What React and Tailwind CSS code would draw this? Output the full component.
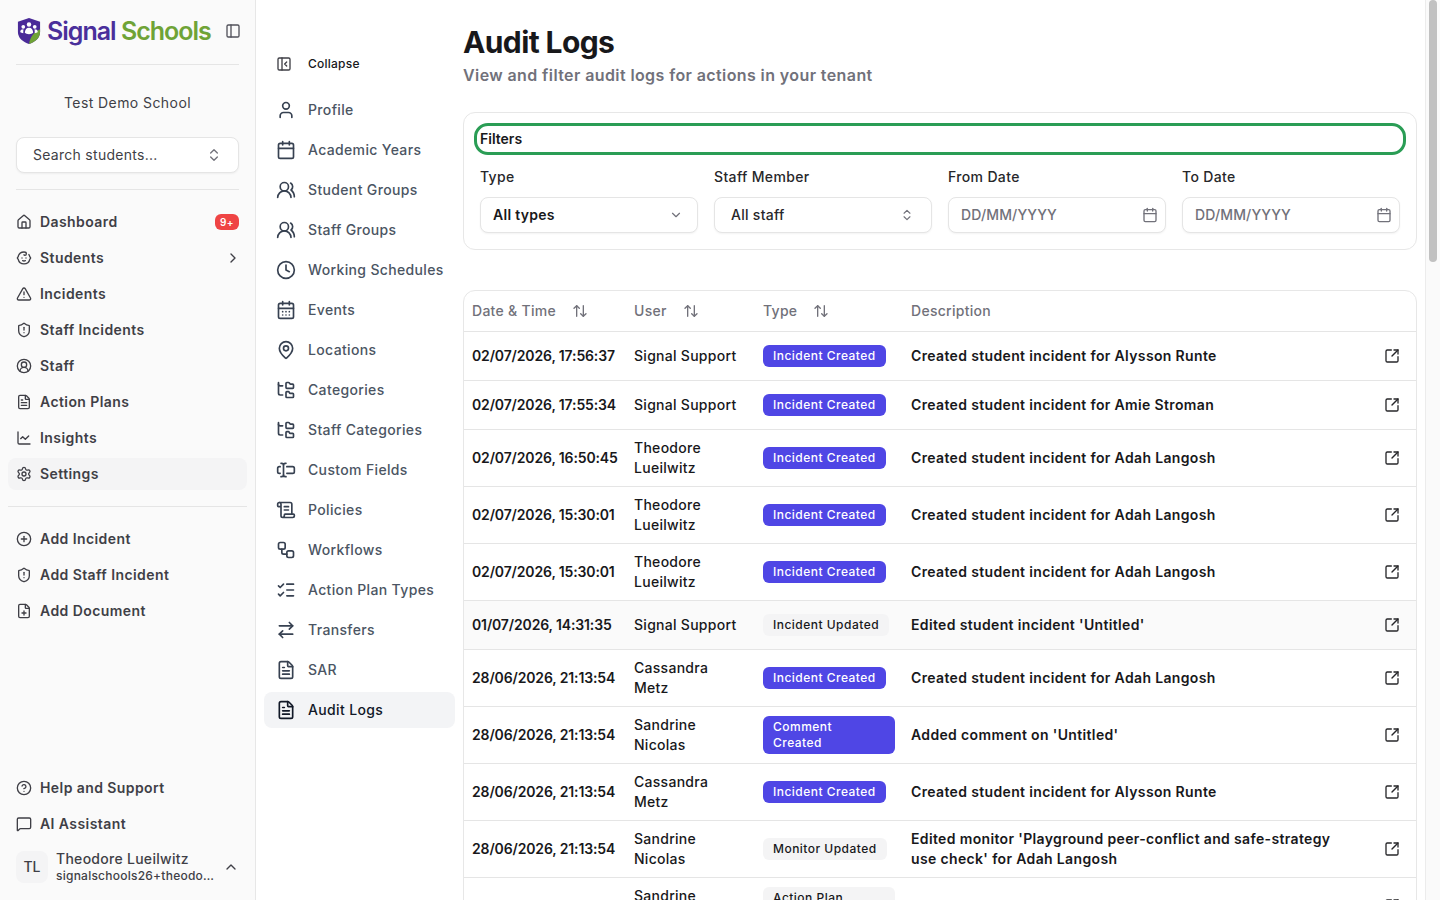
import React from "react";
import {
  ArrowRightLeft, ArrowUpDown, Baby, Calendar, CalendarDays, ChartLine, ChevronDown, ChevronRight, ChevronUp,
  ChevronsUpDown, CircleHelp, CirclePlus, CircleUserRound, Clock, FilePlus, FileText, FolderTree, House, ListChecks,
  MapPin, MessageSquare, PanelLeft, PanelLeftClose, ScrollText, Settings, ShieldAlert, SquareArrowOutUpRight,
  TextCursorInput, TriangleAlert, User, UsersRound, Workflow,
} from "lucide-react";

const mainNav = [
  { label: "Dashboard", icon: House, badge: "9+" },
  { label: "Students", icon: Baby, chevron: true },
  { label: "Incidents", icon: TriangleAlert },
  { label: "Staff Incidents", icon: ShieldAlert },
  { label: "Staff", icon: CircleUserRound },
  { label: "Action Plans", icon: FileText },
  { label: "Insights", icon: ChartLine },
  { label: "Settings", icon: Settings, active: true },
];

const quickNav = [
  { label: "Add Incident", icon: CirclePlus },
  { label: "Add Staff Incident", icon: ShieldAlert },
  { label: "Add Document", icon: FilePlus },
];

const settingsNav = [
  { label: "Profile", icon: User },
  { label: "Academic Years", icon: Calendar },
  { label: "Student Groups", icon: UsersRound },
  { label: "Staff Groups", icon: UsersRound },
  { label: "Working Schedules", icon: Clock },
  { label: "Events", icon: CalendarDays },
  { label: "Locations", icon: MapPin },
  { label: "Categories", icon: FolderTree },
  { label: "Staff Categories", icon: FolderTree },
  { label: "Custom Fields", icon: TextCursorInput },
  { label: "Policies", icon: ScrollText },
  { label: "Workflows", icon: Workflow },
  { label: "Action Plan Types", icon: ListChecks },
  { label: "Transfers", icon: ArrowRightLeft },
  { label: "SAR", icon: FileText },
  { label: "Audit Logs", icon: FileText, active: true },
];

const created = "Incident Created";
const logs = [
  ["02/07/2026, 17:56:37", "Signal Support", created, "Created student incident for Alysson Runte"],
  ["02/07/2026, 17:55:34", "Signal Support", created, "Created student incident for Amie Stroman"],
  ["02/07/2026, 16:50:45", "Theodore\nLueilwitz", created, "Created student incident for Adah Langosh"],
  ["02/07/2026, 15:30:01", "Theodore\nLueilwitz", created, "Created student incident for Adah Langosh"],
  ["02/07/2026, 15:30:01", "Theodore\nLueilwitz", created, "Created student incident for Adah Langosh"],
  ["01/07/2026, 14:31:35", "Signal Support", "Incident Updated", "Edited student incident 'Untitled'"],
  ["28/06/2026, 21:13:54", "Cassandra\nMetz", created, "Created student incident for Adah Langosh"],
  ["28/06/2026, 21:13:54", "Sandrine\nNicolas", "Comment\nCreated", "Added comment on 'Untitled'"],
  ["28/06/2026, 21:13:54", "Cassandra\nMetz", created, "Created student incident for Alysson Runte"],
  ["28/06/2026, 21:13:54", "Sandrine\nNicolas", "Monitor Updated", "Edited monitor 'Playground peer-conflict and safe-strategy use check' for Adah Langosh"],
  ["28/06/2026, 21:13:54", "Sandrine\nNicolas", "Action Plan\nCreated", "Created action plan for Adah Langosh"],
];

const Logo = () => (
  <svg width="24" height="28" viewBox="0 0 26 30" className="shrink-0">
    <path d="M13 1 L25 5 V16 C25 23 19 27 13 29 C7 27 1 23 1 16 V5 Z" fill="#4a2a98" />
    <path d="M25 13 V16 C25 23 19 27 13 29 C14 22 18 16 25 13 Z" fill="#6fa336" />
    <circle cx="13" cy="8" r="2.4" fill="#fff" />
    <circle cx="6.8" cy="10.5" r="2" fill="#fff" />
    <circle cx="19.2" cy="10.5" r="2" fill="#fff" />
    <path d="M8.5 17 C8.5 13.5 10.5 11.5 13 11.5 C15.5 11.5 17.5 13.5 17.5 17 C16 19 10 19 8.5 17 Z" fill="#fff" />
    <path d="M3.5 16 C3.5 14 5 13.2 7 13.2 C7 14.5 6.6 16 6.8 17.4 C5.5 17.2 4.2 16.8 3.5 16 Z" fill="#fff" />
    <path d="M22.5 16 C22.5 14 21 13.2 19 13.2 C19 14.5 19.4 16 19.2 17.4 C20.5 17.2 21.8 16.8 22.5 16 Z" fill="#fff" />
  </svg>
);

const SideItem = ({ item }) => {
  const Icon = item.icon;
  return (
    <a className={`flex h-8 items-center gap-2 rounded-lg px-2 text-sm font-semibold tracking-[0.03em] text-[#3f3f46] ${item.active ? "bg-[#f4f4f5]" : ""}`}>
      <Icon size={16} className="shrink-0" />
      <span className="flex-1">{item.label}</span>
      {item.badge && <span className="rounded-md bg-[#ef4444] px-[5px] text-[10px] leading-4 font-semibold text-white">{item.badge}</span>}
      {item.chevron && <ChevronRight size={16} className="-mr-0.5" />}
    </a>
  );
};

const Sidebar = () => (
  <aside className="flex h-full w-[256px] shrink-0 flex-col border-r border-[#e7e7e7] bg-[#fafafa]">
    <div className="mx-4 flex h-[65px] items-center justify-between border-b border-[#e5e5e5] pb-[2px]">
      <div className="ml-px flex items-center gap-[6px]">
        <Logo />
        <span className="whitespace-nowrap text-[25px] leading-8 font-semibold tracking-[-0.04em]">
          <span className="text-[#4a2f9b]">Signal</span> <span className="text-[#6fa336]">Schools</span>
        </span>
      </div>
      <PanelLeft size={16} className="-mr-0.5 text-[#52525b]" />
    </div>
    <p className="mt-[28px] text-center text-sm leading-5 tracking-[0.03em] text-[#3f3f46]">Test Demo School</p>
    <button className="mx-4 mt-6 flex h-9 items-center justify-between rounded-lg border border-[#e5e5e5] bg-white pr-4 pl-4 text-sm tracking-[0.02em] text-[#3f3f46] shadow-xs">
      Search students...
      <ChevronsUpDown size={16} className="text-[#71717a]" />
    </button>
    <div className="mx-4 mt-4 h-px bg-[#e5e5e5]" />
    <nav className="mt-4 flex flex-col gap-1 px-2">
      {mainNav.map((item) => <SideItem key={item.label} item={item} />)}
    </nav>
    <div className="mx-2 mt-4 h-px bg-[#e5e5e5]" />
    <nav className="mt-4 flex flex-col gap-1 px-2">
      {quickNav.map((item) => <SideItem key={item.label} item={item} />)}
    </nav>
    <nav className="mt-auto flex flex-col gap-1 px-2">
      <SideItem item={{ label: "Help and Support", icon: CircleHelp }} />
      <SideItem item={{ label: "AI Assistant", icon: MessageSquare }} />
    </nav>
    <div className="mt-[10px] mb-4 flex items-center gap-2 px-4">
      <div className="flex size-8 shrink-0 items-center justify-center rounded-lg bg-[#f4f4f5] text-sm font-medium text-[#3f3f46]">TL</div>
      <div className="min-w-0 flex-1">
        <p className="truncate text-sm leading-[18px] font-medium tracking-[0.02em] text-[#3f3f46]">Theodore Lueilwitz</p>
        <p className="truncate text-xs leading-4 font-medium tracking-[0.02em] text-[#3f3f46]">signalschools26+theodore@example.com</p>
      </div>
      <ChevronUp size={16} className="shrink-0 text-[#3f3f46]" />
    </div>
  </aside>
);

const SettingsNav = () => (
  <nav className="flex w-[191px] shrink-0 flex-col gap-1 pt-[46px]">
    <a className="mb-[6px] flex h-9 items-center gap-3 px-3 text-xs font-medium tracking-[0.02em] text-[#18181b]">
      <PanelLeftClose size={16} className="mr-1 shrink-0 text-[#3f3f46]" />
      Collapse
    </a>
    {settingsNav.map(({ label, icon: Icon, active }) => (
      <a key={label} className={`flex h-9 items-center gap-3 rounded-lg px-3 text-sm font-medium tracking-[0.025em] whitespace-nowrap ${active ? "bg-[#f3f4f6] text-[#111827]" : "text-[#4b5563]"}`}>
        <Icon size={20} className={`shrink-0 ${active ? "text-[#111827]" : "text-[#374151]"}`} />
        {label}
      </a>
    ))}
  </nav>
);

const Field = ({ label, children }) => (
  <div className="flex-1">
    <label className="block text-sm leading-5 font-medium tracking-[0.025em] text-[#27272a]">{label}</label>
    <div className="mt-[10px] flex h-9 items-center justify-between rounded-lg border border-[#e5e5e5] bg-white text-sm shadow-xs">{children}</div>
  </div>
);

const DateField = ({ label }) => (
  <Field label={label}>
    <span className="pl-3 font-medium tracking-[0.01em] text-[#71717a]">DD/MM/YYYY</span>
    <Calendar size={16} className="mr-[7px] text-[#71717a]" />
  </Field>
);

const Filters = () => (
  <section className="mt-[25px] h-[138px] rounded-xl border border-[#e7e7e7] bg-white px-4 pt-[10px]">
    <div className="mx-[-6px] flex h-8 items-center rounded-[14px] border-[3px] border-[#2a9d55] pl-[3px] text-sm font-semibold text-[#18181b]">Filters</div>
    <div className="mt-3 flex gap-4">
      <Field label="Type">
        <span className="pl-3 font-semibold tracking-[0.02em] text-[#18181b]">All types</span>
        <ChevronDown size={14} className="mr-[14px] text-[#71717a]" />
      </Field>
      <Field label="Staff Member">
        <span className="pl-4 font-medium tracking-[0.02em] text-[#27272a]">All staff</span>
        <ChevronsUpDown size={14} className="mr-[17px] text-[#71717a]" />
      </Field>
      <DateField label="From Date" />
      <DateField label="To Date" />
    </div>
  </section>
);

const Badge = ({ label }) => {
  const solid = label === created || label.startsWith("Comment");
  const tone = solid ? "bg-[#4f46e5] text-white" : "bg-[#f4f4f5] text-[#18181b]";
  const wide = label.includes("\n") ? "w-full" : "";
  return <span className={`inline-block rounded-md px-[10px] py-[3px] text-xs leading-4 font-medium tracking-[0.04em] whitespace-pre-line ${tone} ${wide}`}>{label}</span>;
};

const SortHead = ({ label, width }) => (
  <th className={`${width} px-2 text-left font-medium`}>
    <span className="flex items-center gap-4">
      {label}
      <ArrowUpDown size={16} className="text-[#71717a]" />
    </span>
  </th>
);

const LogTable = () => (
  <div className="mt-10 rounded-xl border border-[#e7e7e7] bg-white">
    <table className="w-full table-fixed border-collapse text-sm tracking-[0.02em]">
      <thead>
        <tr className="h-10 border-b border-[#e5e5e5] text-[#71717a]">
          <SortHead label="Date & Time" width="w-[162px]" />
          <SortHead label="User" width="w-[129px]" />
          <SortHead label="Type" width="w-[148px]" />
          <th className="px-2 text-left font-medium">Description</th>
          <th className="w-[56px]" />
        </tr>
      </thead>
      <tbody className="font-medium text-[#18181b]">
        {logs.map(([date, user, type, text], i) => (
          <tr key={i} className={`border-b border-[#e5e5e5] ${i === 5 ? "bg-[#fafafa]" : ""}`}>
            <td className="h-[49px] px-2 py-2 font-semibold tracking-[-0.01em] whitespace-nowrap">{date}</td>
            <td className="px-2 py-2 leading-5 whitespace-pre-line">{user}</td>
            <td className="px-2 py-2 leading-none"><Badge label={type} /></td>
            <td className="px-2 py-2 leading-5 font-semibold tracking-[0.025em]">{text}</td>
            <td className="py-2 pr-4 pl-6"><SquareArrowOutUpRight size={16} className="text-[#27272a]" /></td>
          </tr>
        ))}
      </tbody>
    </table>
  </div>
);

export default function App() {
  return (
    <div className="flex h-screen overflow-hidden bg-white font-['Inter',sans-serif]">
      <Sidebar />
      <div className="flex min-w-0 flex-1 gap-2 pl-2">
        <SettingsNav />
        <main className="min-w-0 flex-1 pt-6">
          <h1 className="text-3xl leading-9 font-bold tracking-[-0.02em] text-[#18181b]">Audit Logs</h1>
          <p className="mt-[3px] text-base leading-6 font-semibold tracking-[0.025em] text-[#71717a]">View and filter audit logs for actions in your tenant</p>
          <Filters />
          <LogTable />
        </main>
        <div className="ml-0 w-[15px] shrink-0 border-l border-[#ececec] bg-[#fafafa] pl-[3px]">
          <div className="h-[262px] w-2 rounded-full bg-[#c1c1c1]" />
        </div>
      </div>
    </div>
  );
}
